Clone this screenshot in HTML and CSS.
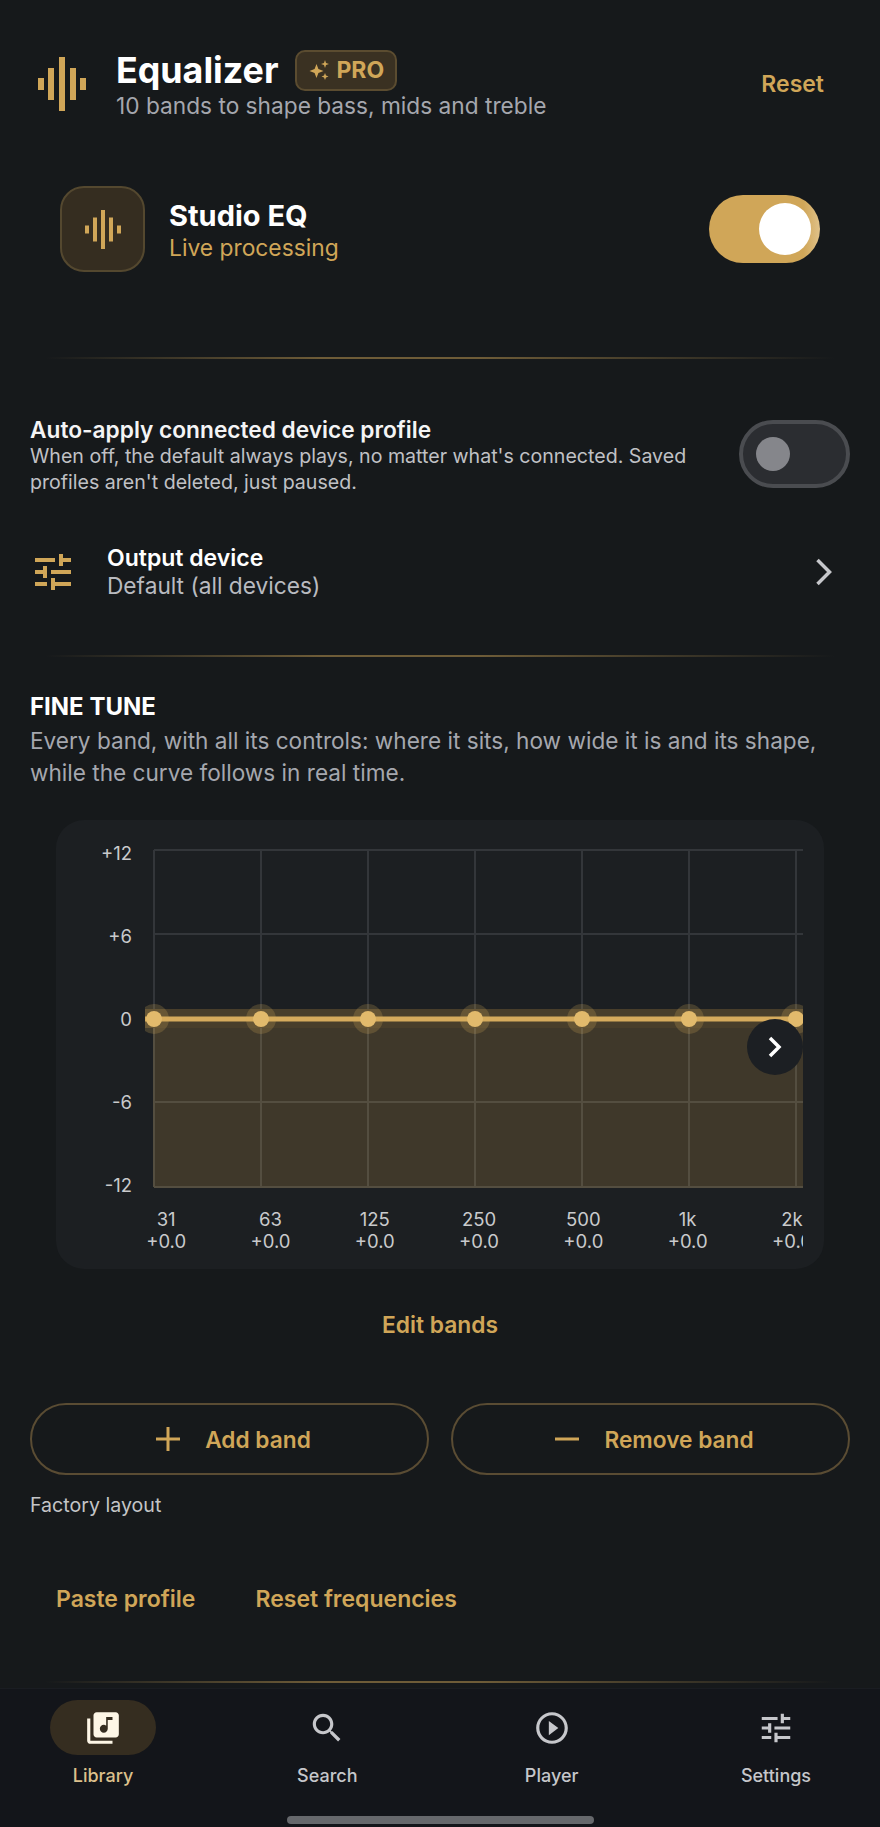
FILE: index.html
```html
<!DOCTYPE html>
<html lang="en">
<head>
    <meta charset="UTF-8">
    <meta name="viewport" content="width=device-width, initial-scale=1.0">
    <title>Equalizer</title>
    <link rel="stylesheet" href="styles.css">
</head>
<body>
    <header class="header">
        <svg class="header-icon" width="50" height="54" viewBox="0 0 50 54" fill="#d0a658">
            <rect x="1" y="21" width="6" height="12"/>
            <rect x="11" y="11" width="6" height="32"/>
            <rect x="22" y="0" width="6" height="54"/>
            <rect x="33" y="11" width="6" height="32"/>
            <rect x="43" y="21" width="6" height="12"/>
        </svg>
        <div class="header-text">
            <div class="title-row">
                <h1>Equalizer</h1>
                <span class="badge">
                    <svg width="21" height="20" viewBox="0 0 21 20" fill="#d0a658">
                        <path d="M7.5 4 9.4 9.1 14.5 11 9.4 12.9 7.5 18 5.6 12.9 .5 11 5.6 9.1Z"/>
                        <path d="M16 0 17 3 20 4 17 5 16 8 15 5 12 4 15 3Z"/>
                        <path d="M16 13 17 15.5 19.5 16.5 17 17.5 16 20 15 17.5 12.5 16.5 15 15.5Z"/>
                    </svg>
                    PRO
                </span>
            </div>
            <p class="subtitle">10 bands to shape bass, mids and treble</p>
        </div>
        <a class="link reset">Reset</a>
    </header>

    <section class="hero">
        <div class="hero-icon">
            <svg width="36" height="39" viewBox="0 0 36 39" fill="#d0a658">
                <rect x="0" y="15.5" width="4" height="8"/>
                <rect x="8" y="7.5" width="4" height="24"/>
                <rect x="16" y="0" width="4" height="39"/>
                <rect x="24" y="7.5" width="4" height="24"/>
                <rect x="32" y="15.5" width="4" height="8"/>
            </svg>
        </div>
        <div class="hero-text">
            <div class="hero-title">Studio EQ</div>
            <div class="hero-sub">Live processing</div>
        </div>
        <div class="toggle toggle-on"><span class="thumb"></span></div>
    </section>

    <div class="divider divider-first"></div>

    <section class="auto-row">
        <div class="auto-text">
            <div class="auto-title">Auto-apply connected device profile</div>
            <p>When off, the default always plays, no matter what's connected. Saved profiles aren't deleted, just paused.</p>
        </div>
        <div class="toggle toggle-off"><span class="thumb"></span></div>
    </section>

    <section class="output-row">
        <svg width="48" height="48" viewBox="0 0 24 24" fill="#d0a658">
            <path d="M3 17v2h6v-2H3zM3 5v2h10V5H3zm10 16v-2h8v-2h-8v-2h-2v6h2zM7 9v2H3v2h4v2h2V9H7zm14 4v-2H11v2h10zm-6-4h2V7h4V5h-4V3h-2v6z"/>
        </svg>
        <div class="output-text">
            <div class="output-title">Output device</div>
            <div class="output-sub">Default (all devices)</div>
        </div>
        <svg class="output-chevron" width="18" height="28" viewBox="0 0 18 28" fill="none" stroke="#c6c7cb" stroke-width="3.5">
            <path d="M2.5 2 14.5 14 2.5 26"/>
        </svg>
    </section>

    <div class="divider divider-second"></div>

    <section class="fine">
        <h2>FINE TUNE</h2>
        <p>Every band, with all its controls: where it sits, how wide it is and its shape, while the curve follows in real time.</p>
    </section>

    <section class="card">
        <div class="chart">
            <div class="y-axis">
                <span>+12</span>
                <span>+6</span>
                <span>0</span>
                <span>-6</span>
                <span>-12</span>
            </div>
            <div class="plot">
                <svg width="658" height="354" viewBox="0 0 658 354">
                    <rect x="9" y="177" width="649" height="168" fill="#3f382a"/>
                    <rect x="0" y="167" width="658" height="19" fill="#483e2b"/>
                    <g stroke="#33363a" stroke-width="2">
                        <path d="M9 8H658M9 92H658"/>
                        <path d="M9 260H658M9 345H658" stroke="#544e40"/>
                        <path d="M9 8V167M116 8V167M223 8V167M330 8V167M437 8V167M544 8V167M651 8V167"/>
                        <path d="M9 186V345M116 186V345M223 186V345M330 186V345M437 186V345M544 186V345M651 186V345" stroke="#544e40"/>
                    </g>
                    <path d="M0 177H658" stroke="#d6ab5d" stroke-width="5"/>
                    <g fill="#d6ab5d" fill-opacity=".22">
                        <circle cx="9" cy="177" r="15"/>
                        <circle cx="116" cy="177" r="15"/>
                        <circle cx="223" cy="177" r="15"/>
                        <circle cx="330" cy="177" r="15"/>
                        <circle cx="437" cy="177" r="15"/>
                        <circle cx="544" cy="177" r="15"/>
                        <circle cx="651" cy="177" r="15"/>
                    </g>
                    <g fill="#e2ba6c">
                        <circle cx="9" cy="177" r="8"/>
                        <circle cx="116" cy="177" r="8"/>
                        <circle cx="223" cy="177" r="8"/>
                        <circle cx="330" cy="177" r="8"/>
                        <circle cx="437" cy="177" r="8"/>
                        <circle cx="544" cy="177" r="8"/>
                        <circle cx="651" cy="177" r="8"/>
                    </g>
                </svg>
                <button class="scroll-btn">
                    <svg width="16" height="24" viewBox="0 0 16 24" fill="none" stroke="#fff" stroke-width="3.5">
                        <path d="M3 3 12 12 3 21"/>
                    </svg>
                </button>
            </div>
        </div>
        <div class="freqs">
            <div class="freq">31<br>+0.0</div>
            <div class="freq">63<br>+0.0</div>
            <div class="freq">125<br>+0.0</div>
            <div class="freq">250<br>+0.0</div>
            <div class="freq">500<br>+0.0</div>
            <div class="freq">1k<br>+0.0</div>
            <div class="freq">2k<br>+0.0</div>
        </div>
    </section>

    <a class="link edit-bands">Edit bands</a>

    <div class="band-buttons">
        <button class="band-btn">
            <svg width="24" height="24" viewBox="0 0 24 24" fill="#d0a658"><path d="M10.5 0h3v10.5H24v3H13.5V24h-3V13.5H0v-3h10.5z"/></svg>
            Add band
        </button>
        <button class="band-btn">
            <svg width="24" height="24" viewBox="0 0 24 24" fill="#d0a658"><path d="M0 10.5h24v3H0z"/></svg>
            Remove band
        </button>
    </div>

    <div class="layout-name">Factory layout</div>

    <div class="actions">
        <a class="link">Paste profile</a>
        <a class="link">Reset frequencies</a>
    </div>

    <div class="divider divider-nav"></div>

    <nav class="nav">
        <div class="nav-items">
            <div class="nav-item active">
                <span class="nav-icon">
                    <svg width="38" height="38" viewBox="0 0 24 24" fill="#fdf6e6"><path d="M20 2H8c-1.1 0-2 .9-2 2v12c0 1.1.9 2 2 2h12c1.1 0 2-.9 2-2V4c0-1.1-.9-2-2-2zm-2 5h-3v5.5c0 1.38-1.12 2.5-2.5 2.5S10 13.88 10 12.5s1.12-2.5 2.5-2.5c.57 0 1.08.19 1.5.51V5h4v2zM4 6H2v14c0 1.1.9 2 2 2h14v-2H4V6z"/></svg>
                </span>
                Library
            </div>
            <div class="nav-item">
                <span class="nav-icon">
                    <svg width="38" height="38" viewBox="0 0 24 24" fill="#c6c7cb"><path d="M15.5 14h-.79l-.28-.27C15.41 12.59 16 11.11 16 9.5 16 5.91 13.09 3 9.5 3S3 5.91 3 9.5 5.91 16 9.5 16c1.61 0 3.09-.59 4.23-1.57l.27.28v.79l5 4.99L20.49 19l-4.99-5zm-6 0C7.01 14 5 11.99 5 9.5S7.01 5 9.5 5 14 7.01 14 9.5 11.99 14 9.5 14z"/></svg>
                </span>
                Search
            </div>
            <div class="nav-item">
                <span class="nav-icon">
                    <svg width="38" height="38" viewBox="0 0 24 24" fill="#c6c7cb"><path d="M10 16.5l6-4.5-6-4.5v9zM12 2C6.48 2 2 6.48 2 12s4.48 10 10 10 10-4.48 10-10S17.52 2 12 2zm0 18c-4.41 0-8-3.59-8-8s3.59-8 8-8 8 3.59 8 8-3.59 8-8 8z"/></svg>
                </span>
                Player
            </div>
            <div class="nav-item">
                <span class="nav-icon">
                    <svg width="38" height="38" viewBox="0 0 24 24" fill="#c6c7cb"><path d="M3 17v2h6v-2H3zM3 5v2h10V5H3zm10 16v-2h8v-2h-8v-2h-2v6h2zM7 9v2H3v2h4v2h2V9H7zm14 4v-2H11v2h10zm-6-4h2V7h4V5h-4V3h-2v6z"/></svg>
                </span>
                Settings
            </div>
        </div>
        <div class="home-bar"></div>
    </nav>
</body>
</html>
```

FILE: styles.css
```css
* {
    box-sizing: border-box;
}

body {
    margin: 0;
    height: 1827px;
    overflow: hidden;
    background: #16191b;
    color: #fff;
    font-family: Inter, sans-serif;
}

h1, h2, p {
    margin: 0;
}

.link {
    color: #d0a658;
    font-size: 23px;
    line-height: 28px;
    font-weight: 600;
}

/* header */
.header {
    display: flex;
    align-items: center;
    height: 70px;
    margin-top: 49px;
    padding: 0 56px 0 37px;
}

.header-text {
    margin-left: 29px;
    flex: 1;
}

.title-row {
    display: flex;
    align-items: center;
    gap: 17px;
    height: 42px;
}

h1 {
    font-size: 35.8px;
    line-height: 42px;
    font-weight: 700;
}

.badge {
    display: flex;
    align-items: center;
    gap: 6px;
    height: 41px;
    padding: 0 11px 0 12px;
    background: #3a3122;
    border: 2px solid #5b4c30;
    border-radius: 10px;
    color: #d0a658;
    font-size: 23px;
    font-weight: 700;
}

.subtitle {
    margin-top: 2px;
    font-size: 22.7px;
    line-height: 26px;
    color: #a5a7ae;
}

/* studio row */
.hero {
    display: flex;
    align-items: center;
    margin-top: 67px;
    padding: 0 60px;
}

.hero-icon {
    display: flex;
    align-items: center;
    justify-content: center;
    width: 85px;
    height: 86px;
    background: #352d20;
    border: 2px solid #54482f;
    border-radius: 24px;
}

.hero-text {
    margin-left: 24px;
    flex: 1;
}

.hero-title {
    margin-top: 2px;
    font-size: 29px;
    line-height: 36px;
    font-weight: 700;
}

.hero-sub {
    font-size: 22.8px;
    line-height: 28px;
    color: #d0a658;
}

.toggle {
    display: flex;
    align-items: center;
    flex: none;
    width: 111px;
    height: 68px;
    border-radius: 34px;
}

.toggle-on {
    justify-content: flex-end;
    padding-right: 9px;
    background: linear-gradient(to right, #d0a658 85%, #e0c28a);
}

.toggle-on .thumb {
    width: 52px;
    height: 52px;
    background: #fff;
}

.toggle-off {
    margin-top: 3px;
    padding-left: 13px;
    background: #2b2d31;
    border: 4px solid #4a4c50;
}

.toggle-off .thumb {
    width: 34px;
    height: 34px;
    background: #85868b;
}

.thumb {
    border-radius: 50%;
}

.divider {
    height: 2px;
    margin: 0 45px;
    background: linear-gradient(to right, transparent, #6e5c38 35%, #6e5c38 55%, transparent);
}

.divider-first {
    margin-top: 85px;
}

.divider-second {
    margin-top: 56px;
}

/* settings rows */
.auto-row {
    display: flex;
    align-items: flex-start;
    justify-content: space-between;
    margin-top: 58px;
    padding: 0 30px;
}

.auto-text {
    width: 680px;
}

.auto-title {
    font-size: 22.7px;
    line-height: 26px;
    font-weight: 600;
    color: #f4f4f5;
}

.auto-text p {
    font-size: 19.6px;
    line-height: 26px;
    color: #c0c1c5;
}

.output-row {
    display: flex;
    align-items: center;
    margin-top: 50px;
    padding: 0 47px 0 29px;
}

.output-text {
    margin-left: 30px;
    flex: 1;
}

.output-title {
    font-size: 23px;
    line-height: 27px;
    font-weight: 600;
}

.output-sub {
    font-size: 22.7px;
    line-height: 27px;
    color: #b9bbc0;
}

/* fine tune */
.fine {
    margin-top: 36px;
    padding: 0 30px;
}

h2 {
    font-size: 24px;
    line-height: 28px;
    font-weight: 700;
}

.fine p {
    margin-top: 4px;
    font-size: 22.6px;
    line-height: 32px;
    color: #a5a7ae;
}

.card {
    height: 449px;
    margin: 31px 56px 0;
    padding-top: 22px;
    background: #1c1f22;
    border-radius: 28px;
}

.chart {
    display: flex;
    height: 354px;
}

.y-axis {
    display: flex;
    flex-direction: column;
    justify-content: space-between;
    width: 76px;
    text-align: right;
    font-size: 18.5px;
    line-height: 22px;
    color: #c9cacc;
}

.plot {
    position: relative;
    width: 658px;
    height: 354px;
    margin-left: 13px;
    overflow: hidden;
}

.plot svg {
    display: block;
}

.scroll-btn {
    position: absolute;
    top: 177px;
    right: 0;
    display: flex;
    align-items: center;
    justify-content: center;
    width: 56px;
    height: 56px;
    padding: 0;
    background: #1c1f23;
    border: none;
    border-radius: 50%;
}

.freqs {
    display: flex;
    width: 689px;
    margin: 12px 0 0 58px;
    overflow: hidden;
}

.freq {
    flex: none;
    width: 104.3px;
    text-align: center;
    font-size: 18.5px;
    line-height: 22px;
    color: #c9cacc;
}

/* buttons under the chart */
.edit-bands {
    display: block;
    margin-top: 42px;
    text-align: center;
    font-size: 22.8px;
}

.band-buttons {
    display: flex;
    gap: 22px;
    margin-top: 64px;
    padding: 0 30px;
}

.band-btn {
    display: flex;
    align-items: center;
    justify-content: center;
    gap: 25px;
    flex: 1;
    height: 72px;
    padding: 0 0 0 8px;
    background: none;
    border: 2px solid #5a4c33;
    border-radius: 36px;
    color: #d0a658;
    font-family: inherit;
    font-size: 22.7px;
    font-weight: 600;
}

.layout-name {
    margin-top: 18px;
    padding-left: 30px;
    font-size: 19.6px;
    line-height: 24px;
    color: #c4c5c7;
}

.actions {
    display: flex;
    gap: 60px;
    margin-top: 68px;
    padding-left: 56px;
}

.divider-nav {
    margin-top: 68px;
}

/* bottom nav */
.nav {
    height: 139px;
    margin-top: 5px;
    padding-top: 11px;
    background: #13151a;
    border-top: 1px solid #1a1d22;
}

.nav-items {
    display: flex;
    justify-content: space-between;
    padding: 0 51px 0 50px;
}

.nav-item {
    width: 106px;
    text-align: center;
    font-size: 18px;
    line-height: 22px;
    font-weight: 500;
    color: #c6c7cb;
}

.nav-item.active {
    color: #dcc08c;
}

.nav-icon {
    display: flex;
    align-items: center;
    justify-content: center;
    height: 55px;
    margin-bottom: 10px;
    border-radius: 28px;
}

.active .nav-icon {
    background: #352d20;
}

.home-bar {
    width: 307px;
    height: 8px;
    margin: 29px auto 0;
    background: #66686c;
    border-radius: 4px;
}
```
